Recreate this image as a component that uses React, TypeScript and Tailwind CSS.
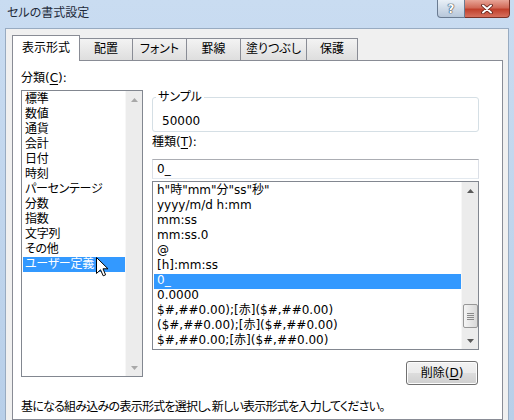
import React from 'react';

const categories = ['標準', '数値', '通貨', '会計', '日付', '時刻', 'パーセンテージ', '分数', '指数', '文字列', 'その他', 'ユーザー定義'];

const formats = [
  'h"時"mm"分"ss"秒"',
  'yyyy/m/d h:mm',
  'mm:ss',
  'mm:ss.0',
  '@',
  '[h]:mm:ss',
  '0_',
  '0.0000',
  '$#,##0.00);[赤]($#,##0.00)',
  '($#,##0.00);[赤]($#,##0.00)',
  '$#,##0.00;[赤]($#,##0.00)',
];

const tabs = [
  { label: '表示形式', w: 'w-[68px]' },
  { label: '配置', w: 'w-[54px]' },
  { label: 'フォント', w: 'w-[55px]' },
  { label: '罫線', w: 'w-[55px]' },
  { label: '塗りつぶし', w: 'w-[67px]' },
  { label: '保護', w: 'w-[52px]' },
];

function Tri({ up, color }: { up?: boolean; color: string }) {
  return (
    <svg width="7" height="4" viewBox="0 0 7 4">
      <path d={up ? 'M0 4 L3.5 0 L7 4 Z' : 'M0 0 L3.5 4 L7 0 Z'} fill={color} />
    </svg>
  );
}

function ScrollBar({ enabled, thumbOffset }: { enabled?: boolean; thumbOffset?: number }) {
  const c = enabled ? '#5a5a5a' : '#a8a8a8';
  return (
    <div className="flex w-[17px] flex-col border-l border-[#f7f7f7] bg-[#ececec]">
      <div className="flex h-[17px] items-center justify-center">
        <Tri up color={c} />
      </div>
      <div className="flex-1">
        {enabled && (
          <div
            className="ml-px flex h-[24px] w-[15px] flex-col items-center justify-center gap-[1px] rounded-[2px] border border-[#979797] bg-[linear-gradient(90deg,#f5f5f5,#e6e6e6_50%,#d9d9d9)]"
            style={{ marginTop: thumbOffset }}
          >
            <div className="h-px w-[7px] bg-[#8a8a8a]" />
            <div className="h-px w-[7px] bg-[#8a8a8a]" />
            <div className="h-px w-[7px] bg-[#8a8a8a]" />
            <div className="h-px w-[7px] bg-[#8a8a8a]" />
          </div>
        )}
      </div>
      <div className="flex h-[17px] items-center justify-center">
        <Tri color={c} />
      </div>
    </div>
  );
}

export default function App() {
  return (
    <div className="relative h-[420px] w-[514px] overflow-hidden bg-gradient-to-b from-[#c9dcf1] to-[#b8cfe9] text-[12px] text-black [font-family:'DejaVu_Sans','Noto_Sans_CJK_JP',sans-serif] [font-feature-settings:'palt']">
      {/* title bar */}
      <div className="flex h-[28px] items-start justify-between">
        <div className="pl-[7px] pt-[6px] leading-[15px] text-[#1e2a3a]">セルの書式設定</div>
        <div className="mr-[4px] flex">
          <div className="flex h-[18px] w-[28px] items-center justify-center rounded-bl-[4px] border border-t-0 border-[#6a7b91] bg-gradient-to-b from-[#e9f0f7] to-[#b7c7da]">
            <span className="text-[12px] font-bold leading-[14px] text-white [text-shadow:0_0_1px_#28384d,0_0_1px_#28384d,0_0_1px_#28384d]">?</span>
          </div>
          <div className="flex h-[18px] w-[45px] items-center justify-center rounded-br-[4px] border border-l-0 border-t-0 border-[#7a3126] bg-[linear-gradient(#e8a597,#d16a58_45%,#c0402c_55%,#d6705e)]">
            <svg width="12" height="10" viewBox="0 0 12 10">
              <path d="M2 1.5 L10 8.5 M10 1.5 L2 8.5" stroke="#5a1c14" strokeWidth="3.6" strokeLinecap="round" />
              <path d="M2 1.5 L10 8.5 M10 1.5 L2 8.5" stroke="#ffffff" strokeWidth="2" strokeLinecap="round" />
            </svg>
          </div>
        </div>
      </div>

      {/* client */}
      <div className="mx-[5px] h-[392px] border-x border-t border-[#98abc1] bg-[#f0f0f0] pl-[6px] pt-[6px]">
        <div className="flex h-[25px] w-[491px] items-end">
          {tabs.map((t, i) => (
            <div
              key={t.label}
              className={
                i === 0
                  ? `relative z-10 -mb-px flex h-[26px] items-center justify-center border border-b-0 border-[#898c95] bg-white leading-[15px] ${t.w}`
                  : `-ml-px flex h-[22px] items-center justify-center border border-b-0 border-[#898c95] bg-gradient-to-b from-[#f3f3f3] to-[#dedede] leading-[15px] ${t.w}`
              }
            >
              {t.label}
            </div>
          ))}
        </div>

        <div className="h-[360px] w-[491px] border border-[#898c95] bg-white pl-[8px] pt-[10px]">
          <div className="leading-[15px]">
            分類(<span className="underline underline-offset-2">C</span>):
          </div>

          <div className="mt-[4px] flex gap-[9px]">
            {/* category list */}
            <div className="flex h-[287px] w-[122px] border border-[#828790]">
              <div className="flex-1 pt-px">
                {categories.map((c) => (
                  <div
                    key={c}
                    className={`ml-px h-[15px] whitespace-nowrap pl-[2px] leading-[15px] tracking-[-0.3px] ${
                      c === 'ユーザー定義' ? 'bg-[#3399ff] text-white' : ''
                    }`}
                  >
                    {c}
                  </div>
                ))}
              </div>
              <ScrollBar />
            </div>

            {/* right column */}
            <div className="flex w-[327px] flex-col">
              <fieldset className="rounded-[3px] border border-[#d5dfe5]">
                <legend className="ml-[3px] px-[2px] leading-[15px]">サンプル</legend>
                <div className="pb-[2px] pl-[9px] pt-[9px] leading-[15px]">50000</div>
              </fieldset>

              <div className="mt-[3px] leading-[15px]">
                種類(<span className="underline underline-offset-2">T</span>):
              </div>

              <div className="mt-[9px] h-[20px] border border-[#abadb3] border-x-[#dbdfe6] border-b-[#e3e9ef] pl-[4px] leading-[18px]">
                0_
              </div>

              <div className="mt-[2px] flex h-[169px] border border-[#828790]">
                <div className="flex-1 overflow-hidden pt-[2px]">
                  {formats.map((f) => (
                    <div
                      key={f}
                      className={`ml-px h-[15px] whitespace-nowrap pl-[3px] leading-[13px] ${
                        f === '0_' ? 'bg-[#3399ff] text-white' : ''
                      }`}
                    >
                      {f}
                    </div>
                  ))}
                </div>
                <ScrollBar enabled thumbOffset={105} />
              </div>

              <button className="mr-px mt-[11px] flex h-[24px] w-[72px] items-center justify-center self-end rounded-[3px] border border-[#707070] bg-[linear-gradient(#f2f2f2,#ebebeb_50%,#dddddd_50%,#cfcfcf)] leading-[15px] shadow-[inset_0_0_0_1px_#fcfcfc]">
                削除(<span className="underline underline-offset-2">D</span>)
              </button>
            </div>
          </div>

          <div className="mt-[15px] whitespace-nowrap leading-[15px] tracking-[-0.75px]">
            基になる組み込みの表示形式を選択し、新しい表示形式を入力してください。
          </div>
        </div>
      </div>

      {/* mouse pointer */}
      <svg className="absolute left-[96px] top-[257px]" width="13" height="20" viewBox="0 0 13 20">
        <path
          d="M0.5 0.5 L0.5 16.5 L4.5 12.8 L7.2 18.8 L9.6 17.8 L7 11.8 L12 11.8 Z"
          fill="#ffffff"
          stroke="#000000"
          strokeWidth="1"
          strokeLinejoin="round"
        />
      </svg>
    </div>
  );
}
